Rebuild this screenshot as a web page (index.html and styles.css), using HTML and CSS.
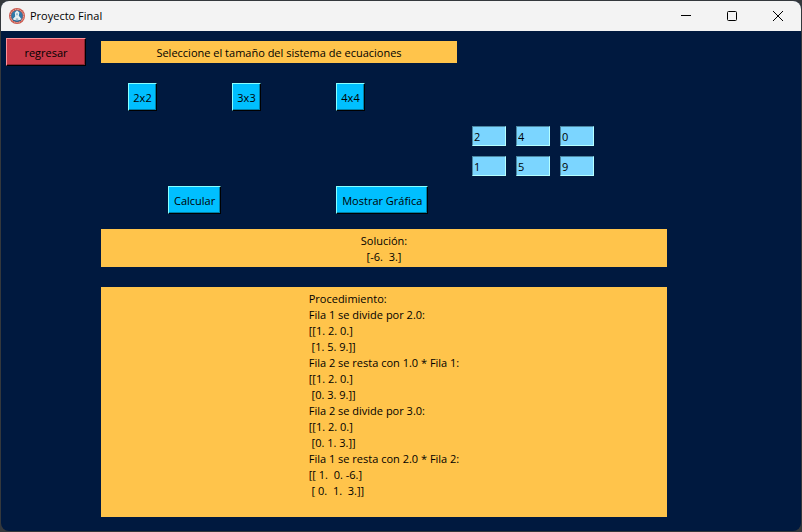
FILE: index.html
```html
<!DOCTYPE html>
<html lang="es">
<head>
<meta charset="utf-8">
<title>Proyecto Final</title>
<link rel="stylesheet" href="styles.css">
</head>
<body>
<div class="window">
  <header class="titlebar">
    <svg class="logo" viewBox="0 0 16 16" aria-hidden="true">
      <circle cx="8" cy="8" r="8" fill="#c9574c"/>
      <circle cx="8" cy="8" r="6.6" fill="none" stroke="#e9b9b2" stroke-width="1" stroke-dasharray="1.4 1"/>
      <circle cx="8" cy="8" r="5.8" fill="#2f78a8"/>
      <path d="M8 2.4 10.4 4.6 9.8 7.8 12.4 11 10.8 12.6H5.2L3.8 11 6.2 8.4 5.8 4.8Z" fill="#e6eef2"/>
      <path d="M7.3 5.3h1.4v2H7.3zM6.8 10.6h2.4v1.2H6.8z" fill="#7da9c4"/>
      <path d="M4 12.2q4 2.4 8 0" fill="none" stroke="#25618f"/>
    </svg>
    <h1 class="title">Proyecto Final</h1>
    <button class="control" aria-label="Minimizar"><svg viewBox="0 0 10 10"><path d="M0 4.5h10"/></svg></button>
    <button class="control" aria-label="Maximizar"><svg viewBox="0 0 10 10"><rect x=".5" y=".5" width="9" height="9" rx="1"/></svg></button>
    <button class="control" aria-label="Cerrar"><svg viewBox="0 0 10 10"><path d="m0 0 10 10M10 0 0 10"/></svg></button>
  </header>
  <div class="content">
    <nav class="side"><button class="btn btn-back">regresar</button></nav>
    <main class="main">
      <div class="split"><p class="label banner">Seleccione el tamaño del sistema de ecuaciones</p></div>
      <div class="sizes">
        <button class="btn btn-size">2x2</button>
        <button class="btn btn-size">3x3</button>
        <button class="btn btn-size">4x4</button>
      </div>
      <div class="split">
        <div class="matrix">
          <input class="cell" aria-label="Fila 1, columna 1" value="2">
          <input class="cell" aria-label="Fila 1, columna 2" value="4">
          <input class="cell" aria-label="Fila 1, resultado" value="0">
          <input class="cell" aria-label="Fila 2, columna 1" value="1">
          <input class="cell" aria-label="Fila 2, columna 2" value="5">
          <input class="cell" aria-label="Fila 2, resultado" value="9">
        </div>
      </div>
      <div class="actions">
        <button class="btn">Calcular</button>
        <button class="btn">Mostrar Gráfica</button>
      </div>
      <section class="label solution">Solución:
[-6.  3.]</section>
      <section class="label procedure"><div class="steps">Procedimiento:
Fila 1 se divide por 2.0:
[[1. 2. 0.]
 [1. 5. 9.]]
Fila 2 se resta con 1.0 * Fila 1:
[[1. 2. 0.]
 [0. 3. 9.]]
Fila 2 se divide por 3.0:
[[1. 2. 0.]
 [0. 1. 3.]]
Fila 1 se resta con 2.0 * Fila 2:
[[ 1.  0. -6.]
 [ 0.  1.  3.]]</div></section>
    </main>
  </div>
</div>
</body>
</html>
```
FILE: styles.css
```css
* { box-sizing: border-box; }

body {
  margin: 0;
  padding: 1px;
  min-height: 100vh;
  display: flex;
  background: #34383c;
  color: #000;
  font: 11px/16px "Open Sans", "Noto Sans", sans-serif;
}

button, input { font: inherit; color: inherit; }

.window {
  flex: 1;
  display: flex;
  flex-direction: column;
  overflow: hidden;
  border-radius: 8px;
  background: #00193f;
}

.titlebar {
  display: flex;
  align-items: center;
  height: 30px;
  padding-left: 8px;
  background: #f3f3f3;
}

.logo { width: 16px; height: 16px; }

.title {
  flex: 1;
  margin: 0 0 0 5px;
  font-size: 11px;
  font-weight: 400;
}

.control {
  display: grid;
  place-items: center;
  width: 46px;
  height: 30px;
  padding: 0;
  border: 0;
  background: none;
}

.control svg {
  width: 10px;
  height: 10px;
  overflow: visible;
  fill: none;
  stroke: #000;
}

.content {
  flex: 1;
  display: flex;
  padding: 7px 134px 14px 5px;
}

.side { width: 95px; }

.btn {
  height: 28px;
  padding: 2px 5px 0;
  border: 1px solid;
  border-color: #8ff #000 #000 #8ff;
  box-shadow: inset -1px -1px #0080a8;
  background: #00bfff;
}

.btn-back {
  width: 80px;
  border-color: #ff9298 #000 #000 #ff9298;
  box-shadow: inset -1px -1px #8a2632;
  background: #c93847;
}

.btn-size {
  width: 29px;
  padding: 2px 0 0;
}

.main {
  flex: 1;
  display: flex;
  flex-direction: column;
  padding-top: 3px;
}

.split {
  display: grid;
  grid-template-columns: 356fr 210fr;
}

.label {
  margin: 0;
  padding: 4px;
  background: #ffc44b;
  text-align: center;
  white-space: pre;
}

.banner { padding: 4px 0 2px; }

.sizes {
  display: flex;
  gap: 75px;
  margin: 20px 0 15px;
  padding-left: 27px;
}

.matrix {
  grid-column: 2;
  display: grid;
  grid-template-columns: repeat(3, 34px);
  gap: 10px;
  padding-left: 15px;
}

.cell {
  width: 100%;
  height: 20px;
  padding: 1px 1px 0;
  border: 1px solid;
  border-color: #4b87a1 #b5ffff #b5ffff #4b87a1;
  border-radius: 0;
  background: #7bd5ff;
}

.actions {
  display: flex;
  gap: 115px;
  margin: 10px 0 15px;
  padding-left: 67px;
}

.solution {
  margin-bottom: 20px;
  padding: 4px 0 2px;
}

.procedure { flex: 1; }

.steps {
  width: fit-content;
  margin: 0 auto;
  text-align: left;
}
```
